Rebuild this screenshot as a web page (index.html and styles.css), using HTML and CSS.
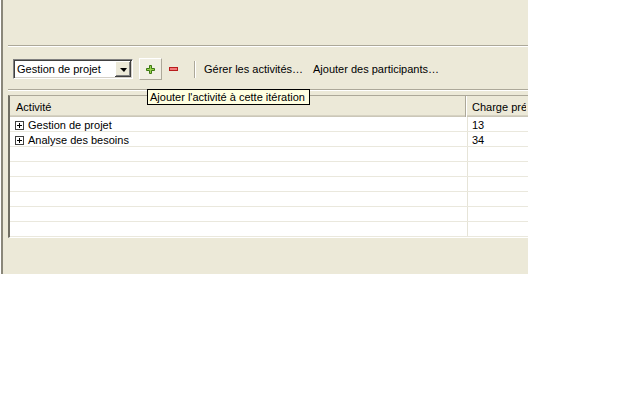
FILE: index.html
```html
<!DOCTYPE html>
<html lang="fr">
<head>
<meta charset="utf-8">
<link rel="stylesheet" href="styles.css">
</head>
<body>
<div class="screen">
  <div class="panel">
    <div class="top"></div>
    <div class="sep"></div>
    <div class="toolbar">
      <div class="combo">
        <span class="combo-text">Gestion de projet</span>
        <span class="combo-btn"><span class="arrow"></span></span>
      </div>
      <span class="tbtn hot">
        <svg width="9" height="9" viewBox="0 0 9 9"><path d="M3.5 0.5h2v3h3v2h-3v3h-2v-3h-3v-2h3z" fill="#9ad24f" stroke="#3d7a12" stroke-width="1"/></svg>
      </span>
      <span class="tbtn">
        <svg width="9" height="4" viewBox="0 0 9 4"><rect x="0.5" y="0.5" width="8" height="3" fill="#f07a7a" stroke="#b81c1c" stroke-width="1"/></svg>
      </span>
      <span class="vsep"></span>
      <span class="link">Gérer les activités…</span>
      <span class="link link2">Ajouter des participants…</span>
    </div>
    <div class="sep sep2"></div>
    <div class="table">
      <div class="thead">
        <div class="hc1">Activité</div>
        <div class="hc2">Charge prévue</div>
      </div>
      <div class="row">
        <div class="c1"><svg class="exp" width="9" height="9" viewBox="0 0 9 9"><rect x="0.5" y="0.5" width="8" height="8" fill="#fff" stroke="#404040"/><path d="M2 4.5h5M4.5 2v5" stroke="#000"/></svg>Gestion de projet</div>
        <div class="c2">13</div>
      </div>
      <div class="row">
        <div class="c1"><svg class="exp" width="9" height="9" viewBox="0 0 9 9"><rect x="0.5" y="0.5" width="8" height="8" fill="#fff" stroke="#404040"/><path d="M2 4.5h5M4.5 2v5" stroke="#000"/></svg>Analyse des besoins</div>
        <div class="c2">34</div>
      </div>
      <div class="row"><div class="c1"></div><div class="c2"></div></div>
      <div class="row"><div class="c1"></div><div class="c2"></div></div>
      <div class="row"><div class="c1"></div><div class="c2"></div></div>
      <div class="row"><div class="c1"></div><div class="c2"></div></div>
      <div class="row"><div class="c1"></div><div class="c2"></div></div>
      <div class="row"><div class="c1"></div><div class="c2"></div></div>
    </div>
  </div>
  <div class="tooltip">Ajouter l'activité à cette itération</div>
</div>
</body>
</html>
```
FILE: styles.css
```css
* { box-sizing: border-box; }
html, body { margin: 0; padding: 0; background: #fff; }
body {
  font-family: "Liberation Sans", Arial, sans-serif;
  font-size: 11px;
  color: #000;
}
.screen { position: relative; width: 640px; height: 400px; background: #fff; overflow: hidden; }
.panel {
  margin-left: 1px;
  width: 527px;
  height: 274px;
  background: #ECE9D8;
  border-left: 2px solid #8a877a;
}
.top { height: 45px; }
.sep {
  margin-left: 5px;
  height: 2px;
  border-top: 1px solid #ACA899;
  border-bottom: 1px solid #fff;
}
.toolbar {
  margin-top: 10px;
  height: 24px;
  padding-left: 10px;
  display: flex;
  align-items: center;
}
.combo {
  width: 120px;
  height: 20px;
  background: #fff;
  border: 1px solid;
  border-color: #808080 #fff #fff #808080;
  box-shadow: inset 1px 1px #404040, inset -1px -1px #D4D0C8;
  display: flex;
  align-items: center;
  padding: 1px;
}
.combo-text { padding-left: 2px; line-height: 16px; white-space: nowrap; }
.combo-btn {
  margin-left: auto;
  width: 16px;
  height: 16px;
  background: #ECE9D8;
  box-shadow: inset -1px -1px #404040, inset 1px 1px #fff, inset -2px -2px #808080;
  display: flex;
  align-items: center;
  justify-content: center;
}
.arrow {
  width: 0; height: 0;
  border-left: 4px solid transparent;
  border-right: 3px solid transparent;
  border-top: 4px solid #000;
  margin-top: 1px;
}
.tbtn {
  width: 23px;
  height: 22px;
  display: flex;
  align-items: center;
  justify-content: center;
}
.tbtn.hot {
  margin-left: 6px;
  background: #F1EFE4;
  border: 1px solid;
  border-color: #fff #ACA899 #ACA899 #fff;
}
.vsep {
  margin-left: 9px;
  width: 2px;
  height: 17px;
  border-left: 1px solid #ACA899;
  border-right: 1px solid #fff;
}
.link { margin-left: 8px; white-space: nowrap; }
.link2 { margin-left: 10px; }
.sep2 { margin-top: 8px; }
.table {
  margin-top: 4px;
  margin-left: 5px;
  width: 520px;
  height: 143px;
  background: #fff;
  border-top: 1px solid #ACA899;
  border-left: 2px solid #716F64;
  border-bottom: 1px solid #fff;
  overflow: hidden;
}
.thead {
  display: flex;
  height: 21px;
  background: #ECE9D8;
  box-shadow: inset 0 -1px #CBC7B8, inset 0 -2px #D6D2C2;
}
.hc1 {
  width: 456px;
  flex: none;
  padding: 1px 0 0 6px;
  line-height: 20px;
  border-right: 1px solid #ACA899;
}
.hc2 {
  flex: none;
  width: 60px;
  padding: 1px 0 0 5px;
  line-height: 20px;
  border-left: 1px solid #fff;
  white-space: nowrap;
  overflow: hidden;
}
.row {
  display: flex;
  height: 15px;
  border-bottom: 1px solid #EAE8DD;
}
.c1 {
  width: 458px;
  flex: none;
  padding: 2px 0 0 5px;
  line-height: 12px;
  border-right: 1px solid #E6E4D8;
  display: flex;
  align-items: center;
  white-space: nowrap;
}
.exp { margin-right: 4px; flex: none; }
.c2 { padding: 2px 0 0 4px; line-height: 12px; }
.tooltip {
  position: absolute;
  left: 147px;
  top: 89px;
  height: 16px;
  padding: 0 4px 0 2px;
  line-height: 14px;
  background: #FFFFE1;
  border: 1px solid #000;
  white-space: nowrap;
}
```
